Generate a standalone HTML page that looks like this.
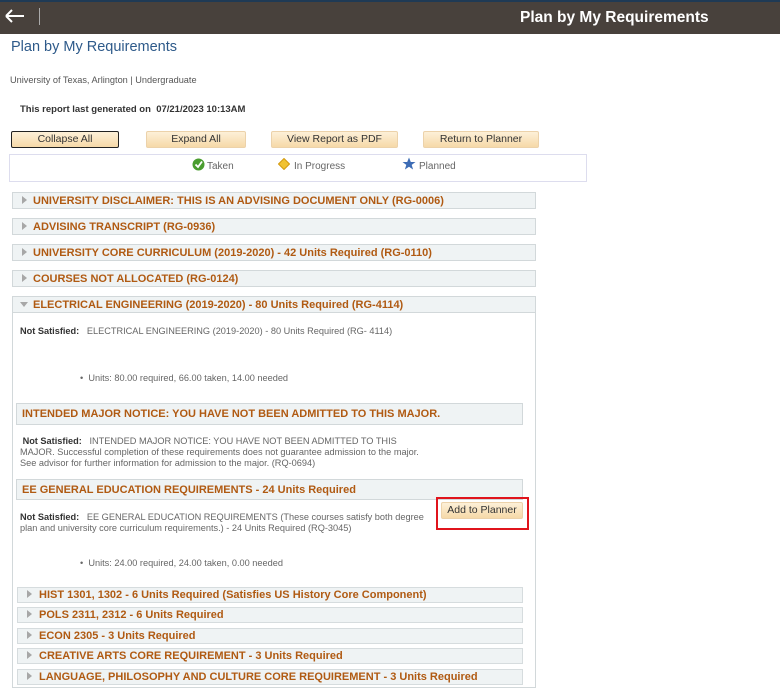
<!DOCTYPE html>
<html><head><style>
body{margin:0;width:780px;height:675px;overflow:hidden;background:#fff;font-family:"Liberation Sans",Arial,sans-serif;position:relative}
.a{position:absolute}
.hdr{left:0;top:0;width:780px;height:34px;background:#48413c;border-top:2px solid #1f3a55;box-sizing:border-box}
.btn{position:absolute;height:15px;top:131px;background:linear-gradient(#fdf0d8,#f6d9a8);border:1px solid #ecd2aa;border-radius:2px;font-size:10.5px;color:#333;text-align:center;line-height:15px;box-sizing:content-box}
.sec{position:absolute;left:12px;width:522px;height:15px;background:#eff3f4;border:1px solid #d2d8da;color:#b05a12;font-weight:bold;font-size:11px;line-height:16px;padding-left:20px;box-sizing:content-box;white-space:nowrap;overflow:hidden}
.tri{position:absolute;left:9px;top:3px;width:0;height:0;border-left:5px solid #a7a7a7;border-top:4.5px solid transparent;border-bottom:4.5px solid transparent}
.sub{position:absolute;left:16px;width:500px;background:#eff3f4;border:1px solid #d2d8da;color:#b05a12;font-weight:bold;font-size:11px;padding-left:5px}
.crs{position:absolute;left:17px;width:483px;height:14px;background:#eff3f4;border:1px solid #d6dcde;color:#b05a12;font-weight:bold;font-size:11px;line-height:15px;padding-left:21px;white-space:nowrap;overflow:hidden}
.crs .tri{left:9px;top:2px}
.t{position:absolute;font-size:9.2px;color:#666;line-height:11px}
.t b{color:#333}
</style></head><body>
<div class="a hdr"></div>
<svg class="a" style="left:4px;top:8px" width="22" height="16"><path d="M2 8H20M2 8L8 2M2 8L8 14" stroke="#fff" stroke-width="2" fill="none"/></svg>
<div class="a" style="left:39px;top:8px;width:1px;height:17px;background:#aaa"></div>
<div class="a" style="left:520px;top:9px;color:#fff;font-weight:bold;font-size:15.5px">Plan by My Requirements</div>
<div class="a" style="left:11px;top:39px;color:#2e5a8a;font-size:14.5px">Plan by My Requirements</div>
<div class="a" style="left:10px;top:75px;color:#555;font-size:9.2px">University of Texas, Arlington | Undergraduate</div>
<div class="a" style="left:20px;top:104px;color:#333;font-size:9.5px;font-weight:bold">This report last generated on&nbsp;&nbsp;07/21/2023 10:13AM</div>
<div class="btn" style="left:11px;width:106px;border:1px solid #222">Collapse All</div>
<div class="btn" style="left:146px;width:98px">Expand All</div>
<div class="btn" style="left:271px;width:125px">View Report as PDF</div>
<div class="btn" style="left:423px;width:114px">Return to Planner</div>
<div class="a" style="left:9px;top:154px;width:576px;height:26px;border:1px solid #dde;"></div>
<svg class="a" style="left:192px;top:158px" width="13" height="13"><circle cx="6.5" cy="6.5" r="6" fill="#4a9d2f"/><path d="M3.5 6.5L6 9L10 3.5" stroke="#fff" stroke-width="1.8" fill="none"/></svg>
<div class="a" style="left:207px;top:161px;font-size:10px;color:#666">Taken</div>
<svg class="a" style="left:278px;top:158px" width="12" height="12"><path d="M6 0.5L11.5 6L6 11.5L0.5 6Z" fill="#f1c232" stroke="#d49a10"/></svg>
<div class="a" style="left:294px;top:161px;font-size:10px;color:#666">In Progress</div>
<svg class="a" style="left:402px;top:157px" width="14" height="13"><path d="M7 0.5L8.8 5H13.5L9.7 7.9L11.1 12.5L7 9.7L2.9 12.5L4.3 7.9L0.5 5H5.2Z" fill="#3d6cb5"/></svg>
<div class="a" style="left:419px;top:161px;font-size:10px;color:#666">Planned</div>

<div class="sec" style="top:192px;width:502px"><div class="tri"></div>UNIVERSITY DISCLAIMER: THIS IS AN ADVISING DOCUMENT ONLY (RG-0006)</div>
<div class="sec" style="top:218px;width:502px"><div class="tri"></div>ADVISING TRANSCRIPT (RG-0936)</div>
<div class="sec" style="top:244px;width:502px"><div class="tri"></div>UNIVERSITY CORE CURRICULUM (2019-2020) - 42 Units Required (RG-0110)</div>
<div class="sec" style="top:270px;width:502px"><div class="tri"></div>COURSES NOT ALLOCATED (RG-0124)</div>
<div class="a" style="left:12px;top:296px;width:522px;height:390px;border:1px solid #d2d8da"></div>
<div class="sec" style="top:296px;width:502px"><div class="tri" style="left:7px;top:5px;border-left:4.5px solid transparent;border-right:4.5px solid transparent;border-top:5px solid #a7a7a7;border-bottom:0"></div>ELECTRICAL ENGINEERING (2019-2020) - 80 Units Required (RG-4114)</div>
<div class="t" style="left:20px;top:326px"><b>Not Satisfied:</b>&nbsp;&nbsp; ELECTRICAL ENGINEERING (2019-2020) - 80 Units Required (RG- 4114)</div>
<div class="t" style="left:80px;top:373px">•&nbsp; Units: 80.00 required, 66.00 taken, 14.00 needed</div>
<div class="sub" style="top:403px;height:20px;line-height:21px">INTENDED MAJOR NOTICE: YOU HAVE NOT BEEN ADMITTED TO THIS MAJOR.</div>
<div class="t" style="left:20px;top:436px;width:415px">&nbsp;<b>Not Satisfied:</b>&nbsp;&nbsp; INTENDED MAJOR NOTICE: YOU HAVE NOT BEEN ADMITTED TO THIS<br>MAJOR. Successful completion of these requirements does not guarantee admission to the major.<br>See advisor for further information for admission to the major. (RQ-0694)</div>
<div class="sub" style="top:479px;height:19px;line-height:20px">EE GENERAL EDUCATION REQUIREMENTS - 24 Units Required</div>
<div class="t" style="left:20px;top:512px;width:418px"><b>Not Satisfied:</b>&nbsp;&nbsp; EE GENERAL EDUCATION REQUIREMENTS (These courses satisfy both degree<br>plan and university core curriculum requirements.) - 24 Units Required (RQ-3045)</div>
<div class="a" style="left:436px;top:497px;width:89px;height:29px;border:2px solid #e0141c"></div>
<div class="btn" style="left:441px;top:502px;width:80px">Add to Planner</div>
<div class="t" style="left:80px;top:558px">•&nbsp; Units: 24.00 required, 24.00 taken, 0.00 needed</div>
<div class="crs" style="top:587px"><div class="tri"></div>HIST 1301, 1302 - 6 Units Required (Satisfies US History Core Component)</div>
<div class="crs" style="top:607px"><div class="tri"></div>POLS 2311, 2312 - 6 Units Required</div>
<div class="crs" style="top:628px"><div class="tri"></div>ECON 2305 - 3 Units Required</div>
<div class="crs" style="top:648px"><div class="tri"></div>CREATIVE ARTS CORE REQUIREMENT - 3 Units Required</div>
<div class="crs" style="top:669px"><div class="tri"></div>LANGUAGE, PHILOSOPHY AND CULTURE CORE REQUIREMENT - 3 Units Required</div>
</body></html>
